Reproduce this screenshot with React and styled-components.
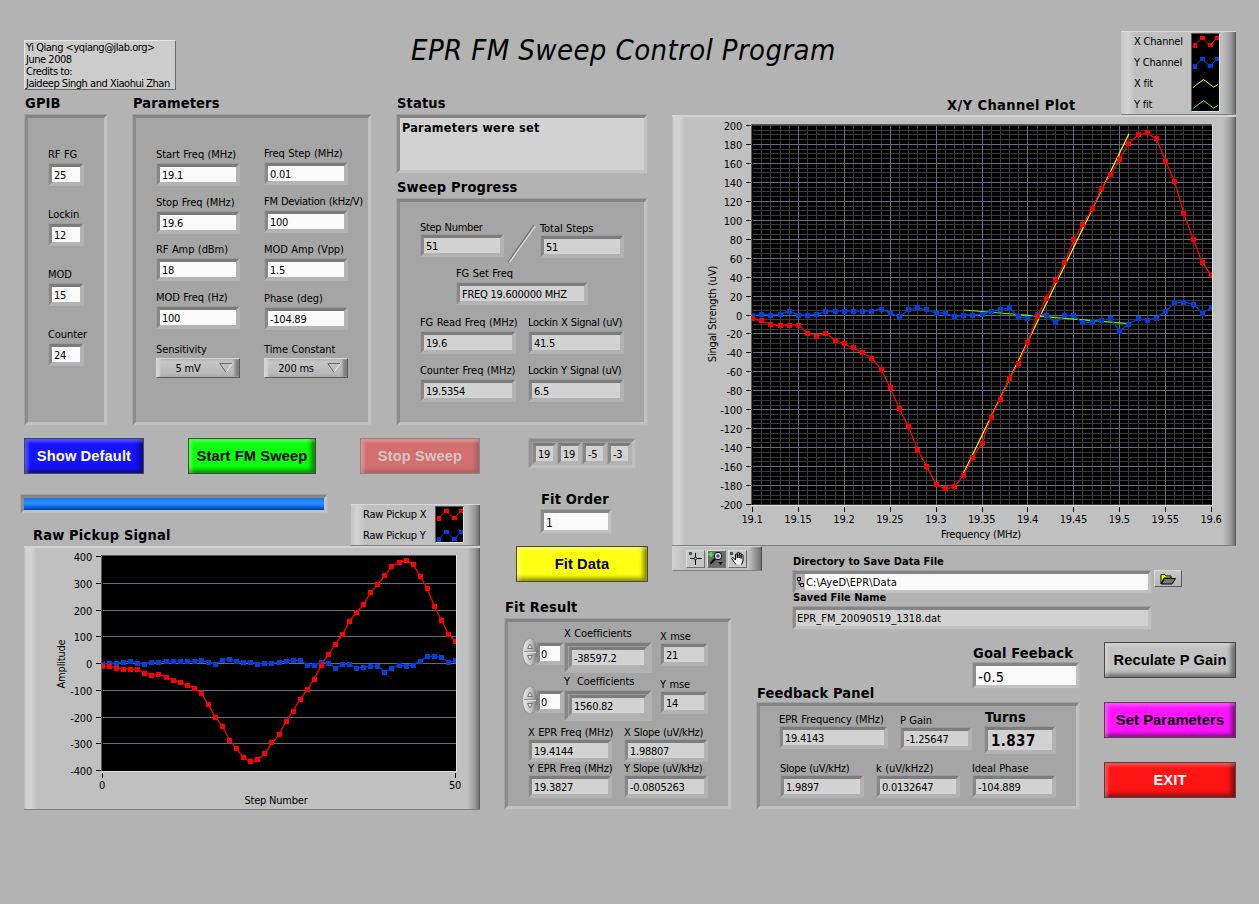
import React from 'react';
import styled, { createGlobalStyle, css } from 'styled-components';

const X_CHANNEL = [
  -4.2, -6.3, -9.5, -11.6, -10.6, -10.6, -19, -22.2, -19, -26.4, -30.6, -34.8,
  -40, -45.4, -57, -77, -99.2, -118.2, -142.5, -160.4, -178.4, -183.6, -181.5,
  -168.9, -149.9, -135.1, -107.7, -88.7, -66.5, -50.7, -28.5, -2.1, 17.9, 35.9,
  54.9, 79.2, 96, 111.9, 133, 147.8, 164.6, 181.5, 190, 192.1, 185.8, 162.5,
  140.4, 106.6, 80.2, 54.9, 42.2,
];

const Y_CHANNEL = [
  -1, 1, 0, 1, 4.2, 0, 0, 1, 3.2, 4.2, 4.2, 4.2, 4.2, 4.2, 6.3, 2.1, -2.1, 5.3,
  7.4, 5.3, 2.1, 2.1, -2.1, 0, 0, 1, 3.2, 6.3, 7.4, -2.1, -3.2, 1, 0, -8.4, -1,
  -1, -8.4, -7.4, -5.3, -4.2, -16.9, -9.5, -4.2, -5.3, -3.2, 4.2, 12.7, 13.7,
  11.6, 2.1, 7.4,
];

const PICKUP_X = [
  -10, -10, -17, -21, -21, -21, -36, -44, -40, -51, -62, -70, -81, -92, -111,
  -155, -200, -237, -286, -319, -353, -368, -360, -338, -297, -267, -215, -178,
  -133, -99, -58, -6, 35, 72, 109, 158, 191, 221, 266, 296, 329, 363, 378, 385,
  370, 326, 281, 214, 162, 109, 83,
];

const PICKUP_Y = [
  -2, 1, 1, 5, 9, 1, -2, 5, 5, 9, 9, 9, 9, 9, 12, 5, -2, 12, 16, 9, 5, 5, -2, 1,
  1, 5, 9, 12, 12, -6, -6, 5, 1, -17, -2, -2, -17, -14, -10, -10, -32, -17, -6,
  -10, -6, 9, 27, 27, 24, 5, 12,
];

const RED = '#ff0000';
const BLUE = '#0040dc';

const range = (from, to, step) => {
  const out = [];
  for (let v = from; v <= to; v += step) out.push(v);
  return out;
};

/* ---------- charts ---------- */

const Chart = ({
  width,
  height,
  plot,
  max,
  yStep,
  minorStep,
  xTicks,
  xMajor,
  series,
  fits = [],
  xLabel,
  yLabel,
  xLabelAt,
  yLabelAt,
}) => {
  const px = (i) => plot.x + (i * plot.w) / 50;
  const py = (v) => plot.y + ((max - v) * plot.h) / (2 * max);
  const snap = (n) => Math.floor(n) + 0.5;
  return (
    <ChartSvg width={width} height={height}>
      <rect
        x={plot.x - 1.5}
        y={plot.y - 1.5}
        width={plot.w + 3}
        height={plot.h + 3}
        fill="#e0e0e0"
      />
      <rect
        x={plot.x - 1.5}
        y={plot.y - 1.5}
        width={plot.w + 2}
        height={plot.h + 2}
        fill="#585858"
      />
      <rect
        x={plot.x - 0.5}
        y={plot.y - 0.5}
        width={plot.w + 1}
        height={plot.h + 1}
        fill="#000"
      />
      <g strokeWidth="1" shapeRendering="crispEdges">
        {minorStep &&
          range(-max, max, minorStep).map((v) => (
            <path
              key={`h${v}`}
              stroke="#3a3a3a"
              d={`M${plot.x} ${snap(py(v))}h${plot.w}`}
            />
          ))}
        {minorStep &&
          range(1, 49, 1).map((i) => (
            <path
              key={`v${i}`}
              stroke="#3a3a3a"
              d={`M${snap(px(i))} ${plot.y}v${plot.h}`}
            />
          ))}
        {range(-max + yStep, max - yStep, yStep).map((v) => (
          <path
            key={`H${v}`}
            stroke="#6c6a80"
            d={`M${plot.x} ${snap(py(v))}h${plot.w}`}
          />
        ))}
        {xMajor &&
          range(xMajor, 49, xMajor).map((i) => (
            <path
              key={`V${i}`}
              stroke="#6c6a80"
              d={`M${snap(px(i))} ${plot.y}v${plot.h}`}
            />
          ))}
        {range(-max, max, yStep).map((v) => (
          <path
            key={`t${v}`}
            stroke="#000"
            d={`M${plot.x - 7} ${snap(py(v))}h5`}
          />
        ))}
        {xTicks.map(([i]) => (
          <path
            key={`x${i}`}
            stroke="#000"
            d={`M${snap(px(i))} ${plot.y + plot.h + 2.5}v5`}
          />
        ))}
      </g>
      {range(-max, max, yStep).map((v) => (
        <text
          key={`l${v}`}
          x={plot.x - 10.5}
          y={snap(py(v)) + 4}
          textAnchor="end"
        >
          {v}
        </text>
      ))}
      {xTicks.map(([i, text]) => (
        <text
          key={text}
          x={px(i) - 0.4}
          y={plot.y + plot.h + 18}
          textAnchor="middle"
        >
          {text}
        </text>
      ))}
      <AxisName x={xLabelAt[0]} y={xLabelAt[1]}>
        {xLabel}
      </AxisName>
      <AxisName transform={`translate(${yLabelAt[0]} ${yLabelAt[1]}) rotate(-90)`}>
        {yLabel}
      </AxisName>
      {fits.map(({ color, from, to }) => (
        <line
          key={color}
          x1={px(from[0])}
          y1={py(from[1])}
          x2={px(to[0])}
          y2={py(to[1])}
          stroke={color}
          strokeWidth="1.2"
        />
      ))}
      {series.map(({ color, data }) => (
        <g key={color} fill={color}>
          <polyline
            fill="none"
            stroke={color}
            strokeWidth="1.3"
            points={data.map((v, i) => `${px(i)},${py(v)}`).join(' ')}
          />
          {data.map((v, i) => {
            const left = Math.round(px(i) - 2.5);
            const cut = i === 0 ? 2 : 0;
            const trim = i === data.length - 1 ? 2 : 0;
            return (
              <rect
                key={i}
                x={left + cut}
                y={Math.round(py(v) - 2.5)}
                width={5 - cut - trim}
                height="5"
                shapeRendering="crispEdges"
              />
            );
          })}
        </g>
      ))}
    </ChartSvg>
  );
};

const LegendMark = ({ color, dots }) =>
  dots ? (
    <svg width="27" height="21">
      <polyline
        points="2.5,11.5 10,3.5 18,11.5 25,3.5"
        fill="none"
        stroke={color}
      />
      <path
        fill={color}
        shapeRendering="crispEdges"
        d="M1 9h4v5h-4zM8 2h5v4h-5zM16 9h5v4h-5zM23 2h4v4h-4z"
      />
    </svg>
  ) : (
    <svg width="27" height="21">
      <polyline
        points="1,11.5 11.5,3.5 21.5,11 26,8.5"
        fill="none"
        stroke={color}
      />
    </svg>
  );

const Legend = ({ items, ...rest }) => (
  <LegendBox {...rest}>
    <LegendNames>
      {items.map((item) => (
        <LegendName key={item.name}>{item.name}</LegendName>
      ))}
    </LegendNames>
    <LegendMarks>
      {items.map((item) => (
        <LegendMark key={item.name} {...item} />
      ))}
    </LegendMarks>
  </LegendBox>
);

/* ---------- fields ---------- */

const Field = ({ label, value, width, input, tight, gap = 2, mt = 0 }) => (
  <FieldBox $width={width} $mt={mt}>
    <Label $tight={tight}>{label}</Label>
    <Inset $gap={gap} $input={input}>
      {value}
    </Inset>
  </FieldBox>
);

const Ring = ({ label, value, mt }) => (
  <FieldBox $width={84} $mt={mt}>
    <Label>{label}</Label>
    <RingButton>
      <span>{value}</span>
      <svg width="14" height="10">
        <path d="M1 .5h12L7 9.5" fill="none" stroke="#eee" />
        <path d="M13 .5H.8L7 9.5" fill="none" stroke="#666" />
      </svg>
    </RingButton>
  </FieldBox>
);

const Coefficient = ({ label, value, mseLabel, mse, mt }) => (
  <CoefRow $mt={mt}>
    <Spinner>
      <svg width="14" height="26">
        <path d="M1 12.5h12" stroke="#8a8a8a" />
        <path d="M1 13.5h12" stroke="#e8e8e8" />
        <path d="M4.5 9.5L7 5l2.5 4.5z" fill="#ddd" stroke="#777" />
        <path d="M4.5 16.5L7 21l2.5-4.5z" fill="#ddd" stroke="#777" />
      </svg>
    </Spinner>
    <IndexInset $input $gap={0}>
      0
    </IndexInset>
    <FieldBox $width={88}>
      <Label>{label}</Label>
      <ArrayFrame $gap={2}>
        <Inset $grow>{value}</Inset>
      </ArrayFrame>
    </FieldBox>
    <MseSlot>
      <Field label={mseLabel} value={mse} width={48} gap={0} />
    </MseSlot>
  </CoefRow>
);

const App = () => {
  return (
    <Page>
      <GlobalStyle />
      <Header>
        <Credits>
          Yi Qiang &lt;yqiang@jlab.org&gt;
          <br />
          June 2008
          <br />
          Credits to:
          <br />
          Jaideep Singh and Xiaohui Zhan
        </Credits>
        <Title>EPR FM Sweep Control Program</Title>
        <PlotLegend
          items={[
            { name: 'X Channel', color: RED, dots: true },
            { name: 'Y Channel', color: BLUE, dots: true },
            { name: 'X fit', color: '#ffff00' },
            { name: 'Y fit', color: '#60ff00' },
          ]}
        />
      </Header>

      <Settings>
        <Column $width={84}>
          <Heading>GPIB</Heading>
          <GpibPanel>
            <Field label="RF FG" value="25" width={36} input />
            <Field label="Lockin" value="12" width={36} input />
            <Field label="MOD" value="15" width={36} input />
            <Field label="Counter" value="24" width={36} input />
          </GpibPanel>
        </Column>
        <Column $width={240}>
          <Heading>Parameters</Heading>
          <ParameterPanel>
            <Column $width={84}>
              <Field label="Start Freq (MHz)" value="19.1" input mt={30} />
              <Field label="Stop Freq (MHz)" value="19.6" input mt={10} />
              <Field label="RF Amp (dBm)" value="18" input mt={9} />
              <Field label="MOD Freq (Hz)" value="100" input mt={10} />
              <Ring label="Sensitivity" value="5 mV" mt={14} />
            </Column>
            <Column $width={84}>
              <Field label="Freq Step (MHz)" value="0.01" input mt={29} />
              <Field
                label="FM Deviation (kHz/V)"
                value="100"
                input
                tight
                mt={10}
              />
              <Field label="MOD Amp (Vpp)" value="1.5" input mt={10} />
              <Field label="Phase (deg)" value="-104.89" input mt={11} />
              <Ring label="Time Constant" value="200 ms" mt={13} />
            </Column>
          </ParameterPanel>
        </Column>
        <Column $width={252}>
          <Heading>Status</Heading>
          <StatusBox>Parameters were set</StatusBox>
          <Heading>Sweep Progress</Heading>
          <SweepPanel>
            <Row>
              <Field label="Step Number" value="51" width={84} gap={0} tight />
              <Slash width="36" height="40">
                <path d="M4 41L30 4" stroke="#6e6e6e" strokeWidth="1.2" />
                <path d="M5.4 41.4L31.4 5" stroke="#dedede" strokeWidth="1.2" />
              </Slash>
              <Field label="Total Steps" value="51" width={84} gap={0} mt={1} />
            </Row>
            <SetFreq>
              <Field label="FG Set Freq" value="FREQ 19.600000 MHZ" width={132} />
            </SetFreq>
            <Row $mt={11} $gap={12}>
              <Field label="FG Read Freq (MHz)" value="19.6" width={96} />
              <Field label="Lockin X Signal (uV)" value="41.5" width={96} tight />
            </Row>
            <Row $mt={10} $gap={12}>
              <Field label="Counter Freq (MHz)" value="19.5354" width={96} />
              <Field label="Lockin Y Signal (uV)" value="6.5" width={96} tight />
            </Row>
          </SweepPanel>
        </Column>
      </Settings>

      <PlotSection>
        <PlotHeading>X/Y Channel Plot</PlotHeading>
        <ChartPanel>
          <Chart
            width={564}
            height={431}
            plot={{ x: 80.5, y: 10.5, w: 459, h: 379 }}
            max={200}
            yStep={20}
            minorStep={5}
            xMajor={5}
            xTicks={range(0, 50, 5).map((i) => [i, String((1910 + i) / 100)])}
            series={[
              { color: BLUE, data: Y_CHANNEL },
              { color: RED, data: X_CHANNEL },
            ]}
            fits={[
              { color: '#ffff00', from: [23, -166.7], to: [41, 191] },
              { color: '#60ff00', from: [23, 5.3], to: [41, -9.2] },
            ]}
            xLabel="Frequency (MHz)"
            yLabel="Singal Strength (uV)"
            xLabelAt={[309, 423]}
            yLabelAt={[44, 199]}
          />
        </ChartPanel>
      </PlotSection>

      <Palette>
        <Tool>
          <svg width="18" height="16">
            <path d="M3 2h3v3H3z" fill="#3c5a3c" />
            <path d="M4 8.5h12M9.5 3v12" stroke="#000" />
            <circle cx="9.5" cy="8.5" r="1.3" fill="#ccc" stroke="#000" strokeWidth=".8" />
          </svg>
        </Tool>
        <Tool $pressed>
          <svg width="18" height="16">
            <path d="M1.5 4.5h5M4 2v5" stroke="#3cff1e" strokeWidth="1.5" />
            <circle cx="11" cy="6" r="3.7" fill="#e4e4ff" stroke="#000" />
            <path d="M9 6h4M11 4v4" stroke="#223" />
            <path d="M8 9L3.5 13.5" stroke="#000" strokeWidth="2" />
            <path d="M11 12h5l-2.5 3z" fill="#000" />
          </svg>
        </Tool>
        <Tool>
          <svg width="18" height="16">
            <path d="M2 2h3v3H2z" fill="#3c5a3c" />
            <path
              d="M8 14.500L4 9c-.8-1.4 1-1.8 1.7-.8L7.500 10V5c0-1.500 1.700-1.500 1.800 0v3V3.500c0-1.600 1.900-1.500 1.900 0V8 4c0-1.500 1.900-1.500 1.900.1V8.500 5.500c.1-1.400 1.900-1.300 1.900.2V11l-1.500 3.500"
              fill="#eee"
              stroke="#000"
            />
          </svg>
        </Tool>
      </Palette>

      <Pickup>
        <Row $gap={44} $mt={12} $ml={24}>
          <Button $face="#1414ff" $color="#fff" $width={120}>
            Show Default
          </Button>
          <Button $face="#0cff0c" $width={128}>
            Start FM Sweep
          </Button>
          <Button $face="#d27070" $color="#d6c4c4" $width={120} $disabled>
            Stop Sweep
          </Button>
        </Row>
        <Row>
          <Column $width={351}>
            <Progress>
              <ProgressFill />
            </Progress>
            <PickupHeading>Raw Pickup Signal</PickupHeading>
          </Column>
          <PickupLegend
            items={[
              { name: 'Raw Pickup X', color: RED, dots: true },
              { name: 'Raw Pickup Y', color: BLUE, dots: true },
            ]}
          />
        </Row>
        <PickupPanel>
          <Chart
            width={456}
            height={264}
            plot={{ x: 78.5, y: 10.5, w: 353, h: 214 }}
            max={400}
            yStep={100}
            xTicks={[
              [0, '0'],
              [50, '50'],
            ]}
            series={[
              { color: BLUE, data: PICKUP_Y },
              { color: RED, data: PICKUP_X },
            ]}
            xLabel="Step Number"
            yLabel="Amplitude"
            xLabelAt={[252, 258]}
            yLabelAt={[41, 118]}
          />
        </PickupPanel>
      </Pickup>

      <FitSection>
        <RangeArray $gap={0}>
          <Inset>19</Inset>
          <Inset>19</Inset>
          <Inset>-5</Inset>
          <Inset>-3</Inset>
        </RangeArray>
        <FitOrder>
          <Heading>Fit Order</Heading>
          <OrderInset $input>1</OrderInset>
        </FitOrder>
        <FitButton $face="#ffff14" $width={132}>
          Fit Data
        </FitButton>
        <FitHeading>Fit Result</FitHeading>
        <FitPanel>
          <Coefficient
            label="X Coefficients"
            value="-38597.2"
            mseLabel="X mse"
            mse="21"
            mt={5}
          />
          <Coefficient
            label={'Y\u00a0 Coefficients'}
            value="1560.82"
            mseLabel="Y mse"
            mse="14"
            mt={2}
          />
          <Row $mt={5} $ml={20} $gap={12}>
            <Field label="X EPR Freq (MHz)" value="19.4144" width={84} gap={0} />
            <Field label="X Slope (uV/kHz)" value="1.98807" width={84} gap={0} tight />
          </Row>
          <Row $ml={20} $gap={12}>
            <Field label="Y EPR Freq (MHz)" value="19.3827" width={84} gap={0} />
            <Field label="Y Slope (uV/kHz)" value="-0.0805263" width={84} gap={0} tight />
          </Row>
        </FitPanel>
      </FitSection>

      <Feedback>
        <FileBlock>
          <BoldLabel>Directory to Save Data File</BoldLabel>
          <Row $gap={2}>
            <PathInset>
              <svg width="9" height="16">
                <path
                  d="M1.5 3.5h3v3h-3zM4.5 9.5h3v3h-3zM3 6.5v4h1.5"
                  fill="none"
                  stroke="#000"
                />
              </svg>
              <PathText>C:\AyeD\EPR\Data</PathText>
            </PathInset>
            <Browse>
              <svg width="16" height="12">
                <path d="M1 11V1.5h4l1 1.5h5v2H4z" fill="#ff0" stroke="#000" />
                <path d="M1.5 11L4.5 5.5h11L12 11z" fill="#777" stroke="#000" />
              </svg>
            </Browse>
          </Row>
          <SavedLabel>Saved File Name</SavedLabel>
          <NameInset>EPR_FM_20090519_1318.dat</NameInset>
        </FileBlock>
        <Row $gap={24}>
          <Column $width={324}>
            <FeedbackTop>
              <FeedbackHeading>Feedback Panel</FeedbackHeading>
              <Column $width={108}>
                <GoalHeading>Goal Feeback</GoalHeading>
                <GoalInset $input>-0.5</GoalInset>
              </Column>
            </FeedbackTop>
            <FeedbackPanel>
              <Row $mt={2} $ml={19} $gap={12}>
                <Field
                  label="EPR Frequency (MHz)"
                  value="19.4143"
                  width={109}
                  gap={0}
                  mt={5}
                />
                <Field label="P Gain" value="-1.25647" width={72} gap={0} mt={6} />
                <Column $width={72}>
                  <Heading>Turns</Heading>
                  <TurnsInset>1.837</TurnsInset>
                </Column>
              </Row>
              <Row $mt={8} $ml={20} $gap={12}>
                <Field label="Slope (uV/kHz)" value="1.9897" width={84} gap={0} tight />
                <Field label="k (uV/kHz2)" value="0.0132647" width={84} gap={0} />
                <Field label="Ideal Phase" value="-104.889" width={84} gap={0} />
              </Row>
            </FeedbackPanel>
          </Column>
          <Actions>
            <Button $face="#c2c2c2" $width={132}>
              Reculate P Gain
            </Button>
            <Button $face="#ff14ff" $width={132}>
              Set Parameters
            </Button>
            <Button $face="#ff1414" $color="#fff" $width={132}>
              EXIT
            </Button>
          </Actions>
        </Row>
      </Feedback>
    </Page>
  );
};

/* ---------- styles ---------- */

const GlobalStyle = createGlobalStyle`
  * {
    box-sizing: border-box;
    margin: 0;
    padding: 0;
  }
  body {
    background: #b3b3b3;
    color: #000;
    font-family: Tahoma, "DejaVu Sans Condensed", "DejaVu Sans", sans-serif;
    font-stretch: condensed;
    font-size: 11px;
    line-height: 13px;
    overflow: hidden;
  }
  svg {
    display: block;
    flex: none;
  }
`;

/* fades the outermost pixel of a bevel into what lies behind it */
const softEdge = css`
  position: relative;
  &::after {
    content: '';
    position: absolute;
    inset: -4px;
    border: 1px solid rgba(176, 176, 176, 0.6);
    pointer-events: none;
  }
`;

const sunken = css`
  ${softEdge}
  border: 4px solid;
  border-color: #858585 #c1c1c1 #c1c1c1 #8c8c8c;
`;

const Page = styled.main`
  display: grid;
  grid-template-columns: 504px 168px 84px 503px;
  grid-template-rows: 90px 336px 120px 358px;
  width: 1259px;
  height: 904px;
  white-space: nowrap;
`;

const Column = styled.div`
  display: flex;
  flex-direction: column;
  flex: none;
  width: ${(props) => props.$width}px;
`;

const Row = styled.div`
  display: flex;
  align-items: flex-start;
  gap: ${(props) => props.$gap || 0}px;
  margin-top: ${(props) => props.$mt || 0}px;
  margin-left: ${(props) => props.$ml || 0}px;
`;

const Heading = styled.h2`
  height: 17px;
  margin-left: 1px;
  padding-top: 1px;
  font-size: 14.5px;
  font-weight: bold;
  line-height: 17px;
  letter-spacing: 0.17px;
`;

const Label = styled.div`
  height: 13px;
  letter-spacing: ${(props) => (props.$tight ? -0.3 : -0.07)}px;
  word-spacing: 0.4px;
`;

const BoldLabel = styled.h3`
  height: 13px;
  margin: 9px 0 2px 1px;
  font-size: 11px;
  font-weight: bold;
`;

const SavedLabel = styled(BoldLabel)`
  position: relative;
  margin-top: -3px;
`;

const Inset = styled.div`
  ${softEdge}
  height: 23px;
  flex: ${(props) => (props.$grow ? 1 : 'none')};
  margin-top: ${(props) => props.$gap || 0}px;
  padding: 1px 0 0 2px;
  border: 4px solid;
  border-color: #7c7c7c #b3b3b3 #b3b3b3 #888888;
  background: ${(props) => (props.$input ? '#fafafa' : '#d2d2d2')};
  line-height: 16px;
  letter-spacing: -0.25px;
`;

const FieldBox = styled.div`
  flex: none;
  width: ${(props) => (props.$width ? `${props.$width}px` : '100%')};
  margin-top: ${(props) => props.$mt || 0}px;
`;

const raised = css`
  border: 1px solid;
  border-color: #d6d6d6 #5c5c5c #5c5c5c #d6d6d6;
  background: linear-gradient(#c8c8c8, #b4b4b4);
`;

const RingButton = styled.button`
  ${raised}
  display: flex;
  align-items: center;
  justify-content: space-between;
  width: 84px;
  height: 20px;
  margin-top: 2px;
  padding: 0 6px 0 0;
  box-shadow: inset 3px 0 2px #d2d2d2, inset -4px 0 3px #7c7c7c;
  font: inherit;
  letter-spacing: -0.2px;
  span {
    flex: 1;
    text-align: center;
  }
`;

const Button = styled.button`
  flex: none;
  width: ${(props) => props.$width}px;
  height: 36px;
  border: 1px solid ${(props) => (props.$disabled ? '#858585' : '#484848')};
  background: ${(props) => props.$face};
  box-shadow: inset 3px 3px 3px rgba(255, 255, 255, 0.25),
    inset -4px -3px 4px
      rgba(0, 0, 0, ${(props) => (props.$disabled ? 0.15 : 0.45)});
  color: ${(props) => props.$color || '#000'};
  font: bold 14.67px 'Liberation Sans', Arial, sans-serif;
  letter-spacing: 0.12px;
  white-space: nowrap;
`;

const Header = styled.header`
  grid-column: 1 / 5;
  grid-row: 1;
  display: flex;
  align-items: flex-start;
`;

const Credits = styled.div`
  width: 152px;
  height: 50px;
  margin: 40px 0 0 24px;
  padding: 1px;
  border: 1px solid;
  border-color: #e6e6e6 #6a6a6a #6a6a6a #e6e6e6;
  background: #cccccc;
  line-height: 12px;
  letter-spacing: -0.47px;
`;

const Title = styled.h1`
  width: 470px;
  margin: 33px 0 0 235px;
  font-size: 29px;
  font-weight: normal;
  font-style: italic;
  line-height: 34px;
  letter-spacing: 0.4px;
`;

const LegendBox = styled.div`
  display: flex;
  justify-content: space-between;
  padding: 0 16px 0 12px;
  border-top: 1px solid #d8d8d8;
  border-bottom: 1px solid #808080;
  background: linear-gradient(
    to right,
    #c4c4c4,
    #d4d4d4 6px,
    #c0c0c0 14px,
    #c0c0c0 calc(100% - 14px),
    #9a9a9a calc(100% - 5px),
    #707070 calc(100% - 1px),
    #505050
  );
`;

const PlotLegend = styled(Legend)`
  width: 115px;
  height: 84px;
  margin: 31px 0 0 240px;
  padding-left: 13px;
`;

const PickupLegend = styled(Legend)`
  width: 129px;
  height: 42px;
  margin-top: 30px;
`;

const LegendNames = styled.div`
  letter-spacing: -0.2px;
`;

const LegendName = styled.div`
  height: 21px;
  line-height: 20px;
`;

const LegendMarks = styled.div`
  width: 29px;
  height: calc(100% - 3px);
  margin-top: 1px;
  border: 1px solid;
  border-color: #555 #e0e0e0 #e0e0e0 #555;
  background: #000;
  overflow: hidden;
`;

const Settings = styled.section`
  grid-column: 1 / 3;
  grid-row: 2;
  display: flex;
  gap: 24px;
  padding: 4px 0 0 24px;
`;

const Panel = styled.div`
  ${sunken}
  background: #a5a5a5;
`;

const GpibPanel = styled(Panel)`
  display: flex;
  flex-direction: column;
  gap: 22px;
  height: 312px;
  margin-top: 3px;
  padding: 30px 0 0 20px;
`;

const ParameterPanel = styled(Panel)`
  display: flex;
  gap: 24px;
  height: 312px;
  margin-top: 3px;
  padding-left: 20px;
`;

const StatusBox = styled.div`
  ${sunken}
  height: 60px;
  margin: 3px 0 4px;
  padding: 3px 2px;
  background: #d2d2d2;
  font-size: 12.5px;
  font-weight: bold;
  letter-spacing: 0.3px;
`;

const SweepPanel = styled(Panel)`
  height: 228px;
  margin-top: 3px;
  padding: 19px 0 0 20px;
`;

const Slash = styled.svg`
  overflow: visible;
`;

const SetFreq = styled.div`
  margin: 6px 0 0 36px;
`;

const PlotSection = styled.section`
  grid-column: 3 / 5;
  grid-row: 2 / 4;
`;

const PlotHeading = styled(Heading)`
  margin: 6px 0 2px 275px;
  letter-spacing: 0.4px;
`;

const ChartPanel = styled.div`
  width: 564px;
  height: 431px;
  background: linear-gradient(#d2d2d2, #d2d2d2) top / 100% 2px no-repeat,
    linear-gradient(#808080, #808080) bottom / 100% 1px no-repeat,
    linear-gradient(
      to right,
      #b8b8b8,
      #d4d4d4 2px,
      #d4d4d4 7px,
      #c0c0c0 13px,
      #c0c0c0 calc(100% - 13px),
      #9a9a9a calc(100% - 5px),
      #707070 calc(100% - 1px),
      #505050
    );
`;

const ChartSvg = styled.svg`
  text {
    font-size: 11px;
    letter-spacing: -0.2px;
  }
`;

const AxisName = styled.text`
  text-anchor: middle;
`;

const Palette = styled.div`
  ${raised}
  grid-column: 3 / 5;
  grid-row: 4;
  display: flex;
  gap: 2px;
  width: 90px;
  height: 25px;
  padding: 3px 0 0 13px;
  border-color: #d2d2d2 #505050 #808080 #d2d2d2;
  background: linear-gradient(to right, #d0d0d0, #c0c0c0 12px, #c0c0c0 76px, #707070);
`;

const Tool = styled.div`
  width: 19px;
  height: 18px;
  border: 1px solid;
  border-color: #dedede #707070 #707070 #dedede;
  background: ${(props) => (props.$pressed ? '#6c6c6c' : '#c6c6c6')};
  overflow: hidden;
  svg {
    margin: -1px 0 0 -1px;
  }
`;

const Pickup = styled.section`
  grid-column: 1;
  grid-row: 3 / 5;
`;

const Progress = styled.div`
  ${sunken}
  width: 308px;
  height: 20px;
  margin: 20px 0 0 20px;
`;

const ProgressFill = styled.div`
  height: 12px;
  background: linear-gradient(#1478f0, #2890ff 45%, #0c70e8 70%, #0040a0);
`;

const PickupHeading = styled(Heading)`
  margin: 12px 0 0 33px;
`;

const PickupPanel = styled(ChartPanel)`
  width: 456px;
  height: 264px;
  margin-left: 24px;
`;

const FitSection = styled.section`
  grid-column: 2 / 4;
  grid-row: 3 / 5;
`;

const ArrayFrame = styled.div`
  ${sunken}
  display: flex;
  height: 31px;
  margin-top: ${(props) => props.$gap}px;
  border-color: #7c7c7c #b3b3b3 #b3b3b3 #868686;
`;

const RangeArray = styled(ArrayFrame)`
  width: 108px;
  margin: 12px 0 0 24px;
  border-color: #8c8c8c #bdbdbd #bdbdbd #949494;
  ${Inset} {
    width: 25px;
  }
`;

const FitOrder = styled.div`
  width: 72px;
  margin: 21px 0 0 36px;
`;

const OrderInset = styled(Inset)`
  height: 25px;
  margin-top: 2px;
  border-color: #858585 #c1c1c1 #c1c1c1 #8d8d8d;
  font-size: 12px;
  line-height: 18px;
`;

const FitButton = styled(Button)`
  display: block;
  margin: 12px 0 0 12px;
`;

const FitHeading = styled(Heading)`
  margin-top: 16px;
`;

const FitPanel = styled(Panel)`
  width: 228px;
  height: 192px;
  margin-top: 3px;
`;

const CoefRow = styled.div`
  display: flex;
  align-items: flex-start;
  height: 46px;
  margin-top: ${(props) => props.$mt}px;
  padding-left: 15px;
`;

const Spinner = styled.div`
  position: relative;
  z-index: 1;
  width: 14px;
  height: 26px;
  margin-top: 12px;
  border-radius: 50%;
  background: linear-gradient(to right, #e8e8e8, #bdbdbd 60%, #777);
  box-shadow: 0 0 1px #555;
`;

const IndexInset = styled(Inset)`
  width: 28px;
  margin: 15px 0 0 -1px;
  padding-left: 1px;
`;

const MseSlot = styled.div`
  margin: 3px 0 0 8px;
`;

const Feedback = styled.section`
  grid-column: 4;
  grid-row: 4;
`;

const FileBlock = styled.div`
  height: 96px;
  padding: 0 0 0 36px;
  display: flow-root;
`;

const PathInset = styled.div`
  ${sunken}
  display: flex;
  width: 360px;
  height: 24px;
`;

const PathText = styled.div`
  flex: 1;
  padding-left: 1px;
  background: #fafafa;
  line-height: 17px;
  letter-spacing: 0.15px;
`;

const Browse = styled.button`
  ${raised}
  width: 28px;
  height: 17px;
  padding: 1px 5px;
`;

const NameInset = styled(Inset)`
  width: 360px;
  height: 24px;
  padding: 0 0 0 1px;
  border-color: #858585 #c1c1c1 #c1c1c1 #8d8d8d;
  line-height: 17px;
  letter-spacing: 0.04px;
`;

const FeedbackTop = styled.div`
  display: flex;
  justify-content: space-between;
  height: 60px;
`;

const FeedbackHeading = styled(Heading)`
  margin-top: 42px;
`;

const GoalHeading = styled(Heading)`
  margin-top: 2px;
`;

const GoalInset = styled(Inset)`
  height: 27px;
  margin-top: 1px;
  border-color: #858585 #c1c1c1 #c1c1c1 #8d8d8d;
  font-size: 14.5px;
  line-height: 20px;
  letter-spacing: 0.2px;
`;

const FeedbackPanel = styled(Panel)`
  width: 324px;
  height: 108px;
`;

const TurnsInset = styled(Inset)`
  height: 28px;
  margin-top: 1px;
  padding-left: 3px;
  font-size: 15px;
  font-weight: bold;
  line-height: 21px;
  letter-spacing: 0.4px;
`;

const Actions = styled.div`
  display: flex;
  flex-direction: column;
  gap: 24px;
`;

export default App;
